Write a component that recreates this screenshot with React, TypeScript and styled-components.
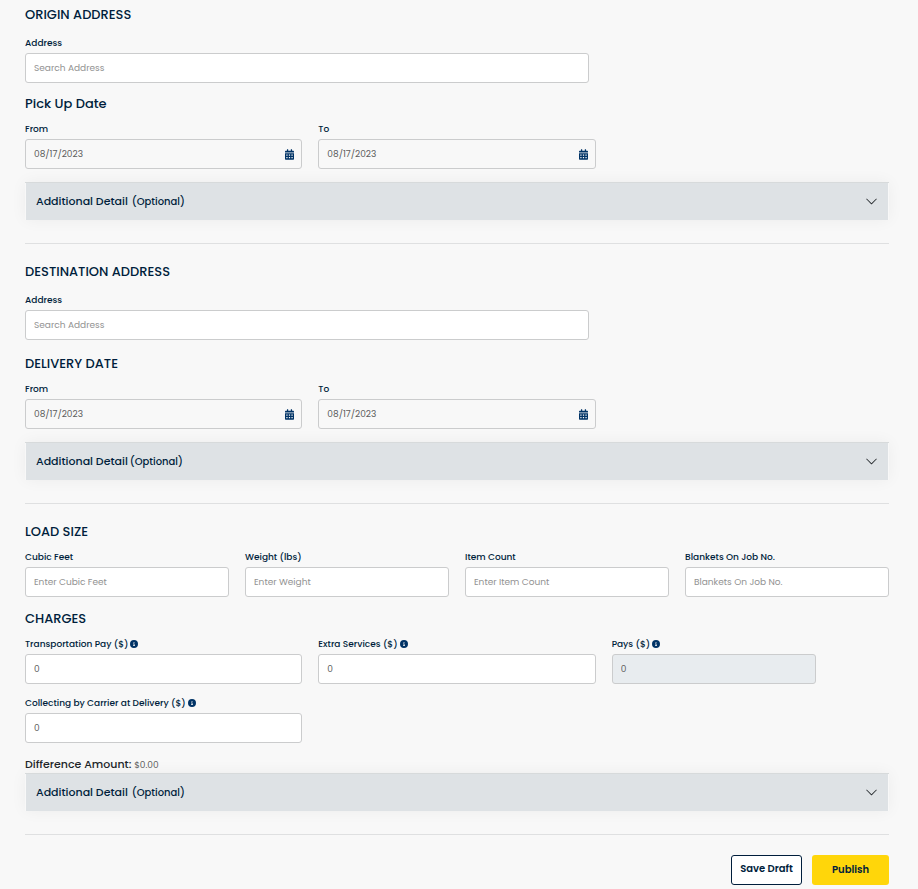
import React, { useId } from 'react';
import styled, { createGlobalStyle, css } from 'styled-components';
import { FaCalendarAlt } from 'react-icons/fa';
import { FaCircleInfo } from 'react-icons/fa6';
import { BsChevronDown } from 'react-icons/bs';

const GlobalStyle = createGlobalStyle`
  *, *::before, *::after { box-sizing: border-box; }
  body {
    margin: 0;
    background: #f8f8f8;
    color: #001e3c;
    font-family: Poppins, Inter, "Open Sans", sans-serif;
    font-size: 9px;
  }
  button, input { font-family: inherit; }
`;

const Form = styled.form`
  padding: 5px 29px 4px 25px;
`;

const Section = styled.section`
  padding-bottom: 23px;
  margin-bottom: 18px;
  border-bottom: 1px solid #dfe0e1;
`;

const Heading = styled.h2<{ $before?: number; $after?: number }>`
  margin: ${({ $before = 0 }) => $before}px 0 ${({ $after = 8 }) => $after}px;
  font-size: 13px;
  line-height: 20px;
  font-weight: 500;
`;

const Row = styled.div`
  display: grid;
  grid-template-columns: repeat(12, minmax(0, 1fr));
  gap: 12px 16px;
`;

const Field = styled.div<{ $span: number; $inset?: number }>`
  grid-column: span ${({ $span }) => $span};
  padding-right: ${({ $inset = 0 }) => $inset}px;
`;

const Label = styled.label`
  display: flex;
  align-items: center;
  gap: 2px;
  margin-bottom: 3px;
  font-size: 9px;
  line-height: 14px;
  font-weight: 500;

  svg {
    width: 8px;
    height: 8px;
    color: #003366;
  }
`;

const InputWrap = styled.div`
  position: relative;
`;

const Input = styled.input<{ $clear?: boolean }>`
  display: block;
  width: 100%;
  height: 30px;
  padding: 0 8px;
  border: 1px solid #cbcccd;
  border-radius: 3px;
  background: ${({ $clear }) => ($clear ? 'transparent' : '#fff')};
  color: #5c5c5c;
  font-size: 9px;
  outline: none;

  &::placeholder {
    color: #929292;
    opacity: 1;
  }

  &:focus { border-color: #003366; }

  &:disabled { background: #e8ecef; }
`;

const CalendarIcon = styled(FaCalendarAlt)`
  position: absolute;
  top: 10px;
  right: 8px;
  width: 9px;
  height: 11px;
  color: #003366;
  pointer-events: none;
`;

const Accordion = styled.div<{ $gap?: number }>`
  margin-top: ${({ $gap = 13 }) => $gap}px;
  border-top: 1px solid #d7dadb;
  box-shadow: 0 0 16px rgba(0, 0, 0, 0.05);
  padding: 0 1px;
`;

const AccordionButton = styled.button`
  display: flex;
  align-items: center;
  justify-content: space-between;
  width: 100%;
  height: 37px;
  padding: 0 10px;
  border: 0;
  background: #dee2e5;
  color: #001e3c;
  font-size: 11px;
  font-weight: 500;
  line-height: 16px;
  cursor: pointer;

  svg {
    width: 13px;
    height: 13px;
    color: #212529;
  }
`;

const AccordionTitle = styled.span`
  padding-bottom: 2px;
`;

const Optional = styled.span<{ $tight?: boolean }>`
  margin-left: ${({ $tight }) => ($tight ? 2 : 4)}px;
  font-size: 10px;
  line-height: 1;
`;

const Difference = styled.p`
  margin: 13px 0 0;
  color: #212529;
  font-size: 11px;
  line-height: 16px;
  font-weight: 500;
`;

const Amount = styled.span`
  color: #5c5c5c;
  font-size: 9px;
  line-height: 1;
  font-weight: 400;
`;

const Actions = styled.div`
  display: flex;
  justify-content: flex-end;
  gap: 10px;
  padding-top: 2px;
`;

const buttonBase = css`
  height: 30px;
  border-radius: 3px;
  color: #001e3c;
  font-size: 10px;
  font-weight: 600;
  white-space: nowrap;
  cursor: pointer;
`;

const SaveButton = styled.button`
  ${buttonBase}
  min-width: 71px;
  padding: 0 7px 2px;
  border: 1px solid #001e3c;
  background: #fff;
`;

const PublishButton = styled.button`
  ${buttonBase}
  min-width: 77px;
  padding: 0 16px;
  border: 0;
  background: #ffd60a;
`;

interface TextFieldProps {
  label: string;
  span: number;
  inset?: number;
  placeholder?: string;
  value?: string;
  info?: boolean;
  date?: boolean;
  disabled?: boolean;
}

function TextField({ label, span, inset, placeholder, value, info, date, disabled }: TextFieldProps) {
  const id = useId();
  return (
    <Field $span={span} $inset={inset}>
      <Label htmlFor={id}>
        {label}
        {info && <FaCircleInfo aria-hidden />}
      </Label>
      <InputWrap>
        <Input
          id={id}
          type="text"
          $clear={date}
          placeholder={placeholder}
          defaultValue={value}
          disabled={disabled}
        />
        {date && <CalendarIcon aria-hidden />}
      </InputWrap>
    </Field>
  );
}

function DateRange() {
  return (
    <Row>
      <TextField label="From" span={4} value="08/17/2023" date />
      <TextField label="To" span={4} value="08/17/2023" date />
    </Row>
  );
}

function AdditionalDetail({ gap, tight }: { gap?: number; tight?: boolean }) {
  return (
    <Accordion $gap={gap}>
      <AccordionButton type="button" aria-expanded={false}>
        <AccordionTitle>
          Additional Detail
          <Optional $tight={tight}>(Optional)</Optional>
        </AccordionTitle>
        <BsChevronDown aria-hidden />
      </AccordionButton>
    </Accordion>
  );
}

export default function App() {
  return (
    <>
      <GlobalStyle />
      <Form onSubmit={(e) => e.preventDefault()}>
        <Section>
          <Heading $after={11}>ORIGIN ADDRESS</Heading>
          <Row>
            <TextField label="Address" span={8} inset={7} placeholder="Search Address" />
          </Row>
          <Heading $before={11}>Pick Up Date</Heading>
          <DateRange />
          <AdditionalDetail />
        </Section>

        <Section>
          <Heading $after={11}>DESTINATION ADDRESS</Heading>
          <Row>
            <TextField label="Address" span={8} inset={7} placeholder="Search Address" />
          </Row>
          <Heading $before={14}>DELIVERY DATE</Heading>
          <DateRange />
          <AdditionalDetail tight />
        </Section>

        <Section>
          <Heading>LOAD SIZE</Heading>
          <Row>
            <TextField label="Cubic Feet" span={3} placeholder="Enter Cubic Feet" />
            <TextField label="Weight (lbs)" span={3} placeholder="Enter Weight" />
            <TextField label="Item Count" span={3} placeholder="Enter Item Count" />
            <TextField label="Blankets On Job No." span={3} placeholder="Blankets On Job No." />
          </Row>
          <Heading $before={12}>CHARGES</Heading>
          <Row>
            <TextField label="Transportation Pay ($)" span={4} value="0" info />
            <TextField label="Extra Services ($)" span={4} value="0" info />
            <TextField label="Pays ($)" span={3} value="0" info disabled />
            <TextField label="Collecting by Carrier at Delivery ($)" span={4} value="0" info />
          </Row>
          <Difference>
            Difference Amount: <Amount>$0.00</Amount>
          </Difference>
          <AdditionalDetail gap={1} />
        </Section>

        <Actions>
          <SaveButton type="button">Save Draft</SaveButton>
          <PublishButton type="submit">Publish</PublishButton>
        </Actions>
      </Form>
    </>
  );
}
